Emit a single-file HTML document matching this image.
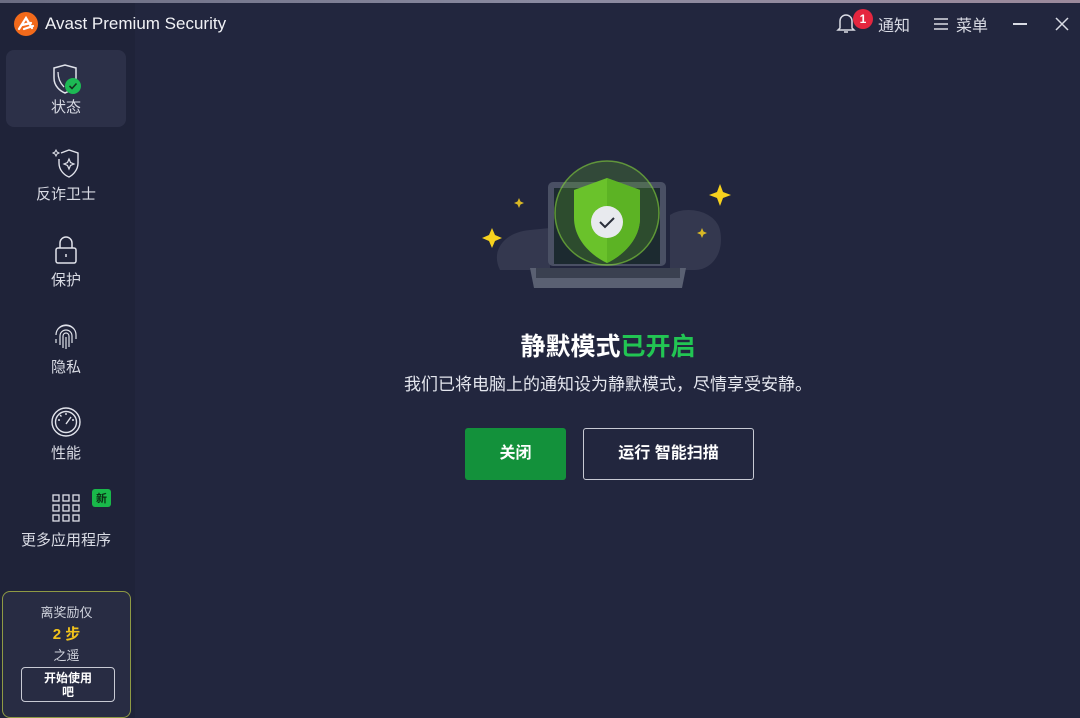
<!DOCTYPE html>
<html><head><meta charset="utf-8"><style>
*{margin:0;padding:0;box-sizing:border-box}
body{width:1080px;height:718px;overflow:hidden;background:#22263e;font-family:"Liberation Sans","Noto Sans CJK SC",sans-serif;color:#e6e8ef;position:relative}
.topline{position:absolute;left:0;top:0;width:1080px;height:3px;background:linear-gradient(90deg,#6a6c82,#8a8aa0 50%,#9c8a9c)}
.side{position:absolute;left:0;top:0;width:135px;height:718px;background:#1f2339}
.title{position:absolute;left:45px;top:14px;font-size:17px;color:#f0f1f5}
.logo{position:absolute;left:14px;top:12px;width:24px;height:24px;border-radius:50%;background:#f26a1b}
.item{position:absolute;left:6px;width:120px;height:77px;text-align:center;font-size:15px;color:#d9dbe4}
.item svg{display:block;margin:0 auto}
.item .lbl{position:absolute;left:0;right:0;top:46px}
.sel{background:#2c3048;border-radius:8px}
.new{position:absolute;left:92px;top:489px;background:#19b84a;color:#0b2e14;font-size:11px;font-weight:bold;padding:1px 4px;border-radius:3px}
.card{position:absolute;left:2px;top:591px;width:129px;height:127px;border:1px solid #8f9a44;border-radius:8px;background:#282c43;text-align:center;font-size:13px;color:#d0d3dd}
.btnw{position:absolute;left:18px;top:75px;width:94px;height:35px;border:1px solid #c8cad4;border-radius:4px;font-size:12px;font-weight:bold;color:#fff;line-height:14px;padding-top:3px}
.h1{position:absolute;left:0;width:1216px;top:327px;text-align:center;font-size:25px;font-weight:bold;color:#fff}
.sub{position:absolute;left:0;width:1216px;top:370px;text-align:center;font-size:17px;color:#e4e6ee}
.b1{position:absolute;left:465px;top:428px;width:101px;height:52px;background:#13913b;border-radius:3px;color:#fff;font-weight:bold;font-size:16px;text-align:center;line-height:52px}
.b2{position:absolute;left:583px;top:428px;width:171px;height:52px;border:1px solid #c7c9d3;border-radius:3px;color:#fff;font-weight:bold;font-size:16px;text-align:center;line-height:50px}
.tr{position:absolute;top:12px;font-size:16px;color:#d9dbe4}
</style></head><body>
<div class="side"></div>
<div class="topline"></div>
<div class="logo"><svg width="24" height="24" viewBox="0 0 24 24"><path d="M5 17 L12 6 L18 16 M8 13 L17 11 M10 17 L19 14" stroke="#fff" stroke-width="2.2" fill="none" stroke-linecap="round"/></svg></div>
<div class="title">Avast Premium Security</div>

<div class="tr" style="left:836px;top:11px"><svg width="20" height="24" viewBox="0 0 20 24"><path d="M4 17 V10 a6 6 0 0 1 12 0 V17 L18 19 H2 Z M8 21 h4" stroke="#d9dbe4" stroke-width="1.5" fill="none"/></svg></div>
<div style="position:absolute;left:853px;top:9px;width:20px;height:20px;border-radius:50%;background:#e5263f;color:#fff;font-size:12px;font-weight:bold;text-align:center;line-height:20px">1</div>
<div class="tr" style="left:878px">通知</div>
<div class="tr" style="left:933px;top:16px"><svg width="16" height="16" viewBox="0 0 16 16"><path d="M1 3h14M1 8h14M1 13h14" stroke="#d9dbe4" stroke-width="1.4"/></svg></div>
<div class="tr" style="left:956px">菜单</div>
<div style="position:absolute;left:1013px;top:23px;width:14px;height:1.5px;background:#d9dbe4"></div>
<svg style="position:absolute;left:1055px;top:17px" width="14" height="14" viewBox="0 0 14 14"><path d="M1 1L13 13M13 1L1 13" stroke="#d9dbe4" stroke-width="1.5"/></svg>

<div class="item sel" style="top:50px"><svg style="margin-top:14px" width="34" height="32" viewBox="0 0 34 32"><path d="M5 4 L16 1 L27 4 V14 C27 22 21 27 16 29 C11 27 5 22 5 14 Z" stroke="#e0e2ea" stroke-width="1.5" fill="none"/><path d="M9 8 C9 14 11 19 15 23" stroke="#e0e2ea" stroke-width="1.3" fill="none"/><circle cx="24" cy="22" r="8" fill="#1db954"/><path d="M20.5 22 l2.5 2.5 4.5-5" stroke="#14321f" stroke-width="1.6" fill="none"/></svg><div class="lbl">状态</div></div>
<div class="item" style="top:137px"><svg style="margin-top:11px" width="30" height="32" viewBox="0 0 30 32"><path d="M10 5 L18 2 L27 5 V15 C27 22 22 27 18 29 C13 27 8 22 8 15 V11" stroke="#e0e2ea" stroke-width="1.4" fill="none"/><path d="M18 11 l1.5 3.5 3.5 1.5 -3.5 1.5 -1.5 3.5 -1.5-3.5 -3.5-1.5 3.5-1.5z" stroke="#e0e2ea" stroke-width="1.2" fill="none"/><path d="M5 2 l1 2 2 1 -2 1 -1 2 -1-2 -2-1 2-1z" stroke="#e0e2ea" stroke-width="1" fill="none"/></svg><div class="lbl">反诈卫士</div></div>
<div class="item" style="top:223px"><svg style="margin-top:11px" width="26" height="32" viewBox="0 0 26 32"><path d="M7 14 V9 a6 6 0 0 1 12 0 V14" stroke="#e0e2ea" stroke-width="1.5" fill="none"/><rect x="3" y="14" width="20" height="15" rx="2" stroke="#e0e2ea" stroke-width="1.5" fill="none"/><path d="M13 20v3" stroke="#e0e2ea" stroke-width="1.5"/></svg><div class="lbl">保护</div></div>
<div class="item" style="top:310px"><svg style="margin-top:11px" width="28" height="32" viewBox="0 0 28 32"><g stroke="#e0e2ea" stroke-width="1.2" fill="none"><path d="M6 8 a11 11 0 0 1 16 0"/><path d="M4 14 a10 10 0 0 1 20 0 V18"/><path d="M8 24 V15 a6 6 0 0 1 12 0 V22"/><path d="M11 27 V15 a3 3 0 0 1 6 0 V26"/><path d="M14 16 V28"/><path d="M4 18 V22"/></g></svg><div class="lbl">隐私</div></div>
<div class="item" style="top:396px"><svg style="margin-top:10px" width="32" height="32" viewBox="0 0 32 32"><g stroke="#e0e2ea" stroke-width="1.4" fill="none"><circle cx="16" cy="16" r="14"/><circle cx="16" cy="16" r="10.5"/><path d="M16 18 L21 11"/><path d="M16 7v2M8 14h2M22 14h2M10 9l1.5 1.5"/></g></svg><div class="lbl">性能</div></div>
<div class="item" style="top:483px"><svg style="margin-top:10px" width="30" height="32" viewBox="0 0 30 32"><g stroke="#e0e2ea" stroke-width="1.3" fill="none"><rect x="2" y="2" width="6" height="6"/><rect x="12" y="2" width="6" height="6"/><rect x="22" y="2" width="6" height="6"/><rect x="2" y="12" width="6" height="6"/><rect x="12" y="12" width="6" height="6"/><rect x="22" y="12" width="6" height="6"/><rect x="2" y="22" width="6" height="6"/><rect x="12" y="22" width="6" height="6"/><rect x="22" y="22" width="6" height="6"/></g></svg><div class="lbl">更多应用程序</div></div>
<div class="new">新</div>

<div class="card"><div style="margin-top:10px">离奖励仅</div><div style="color:#f2c31b;font-weight:bold;font-size:15px;margin-top:2px">2 步</div><div style="margin-top:1px">之遥</div><div class="btnw">开始使用<br>吧</div></div>

<svg style="position:absolute;left:470px;top:160px" width="270" height="140" viewBox="0 0 270 140">
<path d="M30 110 C20 90 35 72 60 70 L80 68 L80 110 Z" fill="#34384f"/>
<path d="M200 110 L200 55 C215 45 245 50 250 70 C255 95 240 110 225 110 Z" fill="#34384f"/>
<rect x="78" y="22" width="118" height="84" rx="5" fill="#4a5064"/>
<rect x="84" y="28" width="106" height="76" fill="#1c2a30"/>
<path d="M60 108 H216 L212 128 H64 Z" fill="#5a6072"/>
<rect x="66" y="108" width="144" height="10" fill="#3a4050"/>
<circle cx="137" cy="53" r="52" fill="#6cc72a" opacity="0.22"/>
<circle cx="137" cy="53" r="52" stroke="#86d33c" stroke-width="1.5" fill="none" opacity="0.6"/>
<path d="M104 30 L137 18 L170 30 V58 C170 80 152 96 137 103 C122 96 104 80 104 58 Z" fill="#6ac22b"/>
<path d="M137 18 L170 30 V58 C170 80 152 96 137 103 Z" fill="#5cb324"/>
<circle cx="137" cy="62" r="16" fill="#e8eaee"/>
<path d="M130 62 l5 5 9-9" stroke="#2a2e3a" stroke-width="2" fill="none"/>
<path d="M22 68 l3 7 7 3 -7 3 -3 7 -3-7 -7-3 7-3z" fill="#f7d21e"/>
<path d="M250 24 l3 8 8 3 -8 3 -3 8 -3-8 -8-3 8-3z" fill="#f7d21e"/>
<path d="M49 38 l1.5 3.5 3.5 1.5 -3.5 1.5 -1.5 3.5 -1.5-3.5 -3.5-1.5 3.5-1.5z" fill="#d9b825"/>
<path d="M232 68 l1.5 3.5 3.5 1.5 -3.5 1.5 -1.5 3.5 -1.5-3.5 -3.5-1.5 3.5-1.5z" fill="#d9b825"/>
</svg>

<div class="h1">静默模式<span style="color:#22c553">已开启</span></div>
<div class="sub">我们已将电脑上的通知设为静默模式，尽情享受安静。</div>
<div class="b1">关闭</div>
<div class="b2">运行 智能扫描</div>
</body></html>
